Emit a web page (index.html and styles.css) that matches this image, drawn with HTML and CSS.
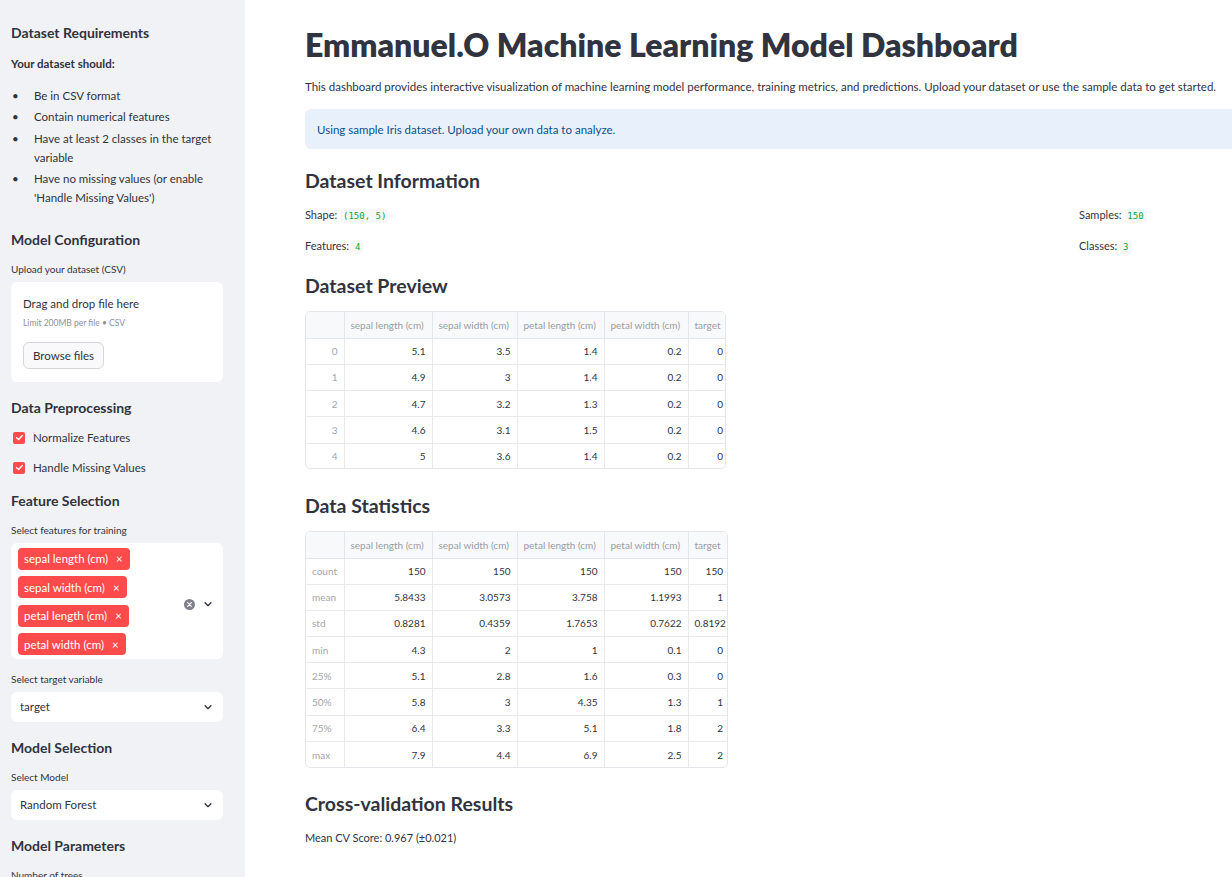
FILE: index.html
```html
<!DOCTYPE html>
<html lang="en">
<head>
<meta charset="utf-8">
<title>Emmanuel.O Machine Learning Model Dashboard</title>
<link rel="stylesheet" href="styles.css">
</head>
<body>
<div class="app">
  <aside class="sidebar">
    <h3 class="sb-h first">Dataset Requirements</h3>
    <p class="sb-strong">Your dataset should:</p>
    <ul class="req">
      <li>Be in CSV format</li>
      <li>Contain numerical features</li>
      <li>Have at least 2 classes in the target variable</li>
      <li>Have no missing values (or enable 'Handle Missing Values')</li>
    </ul>

    <h3 class="sb-h">Model Configuration</h3>
    <div class="lbl">Upload your dataset (CSV)</div>
    <div class="uploader">
      <div class="up-title">Drag and drop file here</div>
      <div class="up-sub">Limit 200MB per file • CSV</div>
      <button class="btn">Browse files</button>
    </div>

    <h3 class="sb-h">Data Preprocessing</h3>
    <div class="check">
      <span class="box"><svg viewBox="0 0 12 12" width="9" height="9"><path d="M2.2 6.2 4.8 8.6 9.8 3.4" fill="none" stroke="#fff" stroke-width="1.8" stroke-linecap="round" stroke-linejoin="round"/></svg></span>
      <span>Normalize Features</span>
    </div>
    <div class="check second">
      <span class="box"><svg viewBox="0 0 12 12" width="9" height="9"><path d="M2.2 6.2 4.8 8.6 9.8 3.4" fill="none" stroke="#fff" stroke-width="1.8" stroke-linecap="round" stroke-linejoin="round"/></svg></span>
      <span>Handle Missing Values</span>
    </div>

    <h3 class="sb-h">Feature Selection</h3>
    <div class="lbl">Select features for training</div>
    <div class="multi">
      <div class="tags">
        <span class="tag">sepal length (cm)<span class="tx">×</span></span>
        <span class="tag">sepal width (cm)<span class="tx">×</span></span>
        <span class="tag">petal length (cm)<span class="tx">×</span></span>
        <span class="tag">petal width (cm)<span class="tx">×</span></span>
      </div>
      <div class="ms-icons">
        <svg class="clear" viewBox="0 0 12 12" width="11" height="11"><circle cx="6" cy="6" r="6" fill="#7f828c"/><path d="M4 4 8 8M8 4 4 8" stroke="#fff" stroke-width="1.3" stroke-linecap="round"/></svg>
        <svg class="chev" viewBox="0 0 12 12" width="10" height="10"><path d="M2.5 4.5 6 8 9.5 4.5" fill="none" stroke="#31333f" stroke-width="1.6" stroke-linecap="round" stroke-linejoin="round"/></svg>
      </div>
    </div>

    <div class="lbl after-widget">Select target variable</div>
    <div class="select">
      <span>target</span>
      <svg class="chev" viewBox="0 0 12 12" width="10" height="10"><path d="M2.5 4.5 6 8 9.5 4.5" fill="none" stroke="#31333f" stroke-width="1.6" stroke-linecap="round" stroke-linejoin="round"/></svg>
    </div>

    <h3 class="sb-h">Model Selection</h3>
    <div class="lbl">Select Model</div>
    <div class="select">
      <span>Random Forest</span>
      <svg class="chev" viewBox="0 0 12 12" width="10" height="10"><path d="M2.5 4.5 6 8 9.5 4.5" fill="none" stroke="#31333f" stroke-width="1.6" stroke-linecap="round" stroke-linejoin="round"/></svg>
    </div>

    <h3 class="sb-h">Model Parameters</h3>
    <div class="lbl">Number of trees</div>
  </aside>

  <main class="main">
    <h1 class="title">Emmanuel.O Machine Learning Model Dashboard</h1>
    <p class="desc">This dashboard provides interactive visualization of machine learning model performance, training metrics, and predictions. Upload your dataset or use the sample data to get started.</p>
    <div class="info">Using sample Iris dataset. Upload your own data to analyze.</div>

    <h2 class="h2">Dataset Information</h2>
    <div class="info-grid">
      <div class="col">
        <p class="kv">Shape: <code>(150, 5)</code></p>
        <p class="kv">Features: <code>4</code></p>
      </div>
      <div class="col">
        <p class="kv">Samples: <code>150</code></p>
        <p class="kv">Classes: <code>3</code></p>
      </div>
    </div>

    <h2 class="h2">Dataset Preview</h2>
    <div class="frame preview">
      <table class="df">
        <colgroup><col class="c0"><col class="c1"><col class="c2"><col class="c3"><col class="c4"><col class="c5"></colgroup>
        <thead><tr><th></th><th>sepal length (cm)</th><th>sepal width (cm)</th><th>petal length (cm)</th><th>petal width (cm)</th><th>target</th></tr></thead>
        <tbody>
          <tr><td class="ix">0</td><td>5.1</td><td>3.5</td><td>1.4</td><td>0.2</td><td>0</td></tr>
          <tr><td class="ix">1</td><td>4.9</td><td>3</td><td>1.4</td><td>0.2</td><td>0</td></tr>
          <tr><td class="ix">2</td><td>4.7</td><td>3.2</td><td>1.3</td><td>0.2</td><td>0</td></tr>
          <tr><td class="ix">3</td><td>4.6</td><td>3.1</td><td>1.5</td><td>0.2</td><td>0</td></tr>
          <tr><td class="ix">4</td><td>5</td><td>3.6</td><td>1.4</td><td>0.2</td><td>0</td></tr>
        </tbody>
      </table>
    </div>

    <h2 class="h2 gap-stats">Data Statistics</h2>
    <div class="frame stats">
      <table class="df">
        <colgroup><col class="c0"><col class="c1"><col class="c2"><col class="c3"><col class="c4"><col class="c5"></colgroup>
        <thead><tr><th></th><th>sepal length (cm)</th><th>sepal width (cm)</th><th>petal length (cm)</th><th>petal width (cm)</th><th>target</th></tr></thead>
        <tbody>
          <tr><td class="ix">count</td><td>150</td><td>150</td><td>150</td><td>150</td><td>150</td></tr>
          <tr><td class="ix">mean</td><td>5.8433</td><td>3.0573</td><td>3.758</td><td>1.1993</td><td>1</td></tr>
          <tr><td class="ix">std</td><td>0.8281</td><td>0.4359</td><td>1.7653</td><td>0.7622</td><td>0.8192</td></tr>
          <tr><td class="ix">min</td><td>4.3</td><td>2</td><td>1</td><td>0.1</td><td>0</td></tr>
          <tr><td class="ix">25%</td><td>5.1</td><td>2.8</td><td>1.6</td><td>0.3</td><td>0</td></tr>
          <tr><td class="ix">50%</td><td>5.8</td><td>3</td><td>4.35</td><td>1.3</td><td>1</td></tr>
          <tr><td class="ix">75%</td><td>6.4</td><td>3.3</td><td>5.1</td><td>1.8</td><td>2</td></tr>
          <tr><td class="ix">max</td><td>7.9</td><td>4.4</td><td>6.9</td><td>2.5</td><td>2</td></tr>
        </tbody>
      </table>
    </div>

    <h2 class="h2 gap-cv">Cross-validation Results</h2>
    <p class="kv">Mean CV Score: 0.967 (±0.021)</p>
  </main>
</div>
</body>
</html>
```

FILE: styles.css
```css
* { box-sizing: border-box; }

html, body {
  margin: 0;
  padding: 0;
  width: 1232px;
  height: 877px;
  overflow: hidden;
  background: #ffffff;
}

body {
  font-family: "Lato", "Liberation Sans", sans-serif;
  color: #31333f;
  -webkit-font-smoothing: antialiased;
}

.app {
  display: flex;
  height: 877px;
}

/* ---------- Sidebar ---------- */
.sidebar {
  flex: 0 0 245px;
  width: 245px;
  height: 877px;
  overflow: hidden;
  background: #f0f2f6;
  padding: 0 22px 0 11px;
  display: flex;
  flex-direction: column;
}
.sidebar > * { flex-shrink: 0; }

.sb-h {
  margin: 16px 0 0;
  font-size: 14px;
  line-height: 20px;
  font-weight: 700;
  color: #31333f;
}
.sb-h.first { margin-top: 23px; }

.sb-strong {
  margin: 12px 0 0;
  font-size: 11.5px;
  line-height: 18px;
  font-weight: 700;
}

.req {
  list-style: none;
  margin: 12.5px 0 0;
  padding: 0;
  font-size: 11.5px;
  line-height: 19px;
}
.req li {
  display: flex;
  margin-bottom: 2.5px;
}
.req li:last-child { margin-bottom: 0; }
.req li::before {
  content: "•";
  flex: 0 0 22px;
  padding-left: 1px;
}
.req + .sb-h { margin-top: 22.5px; }

.lbl {
  margin-top: 12px;
  font-size: 10px;
  line-height: 14px;
}
.lbl.after-widget { margin-top: 13px; }

.uploader {
  margin-top: 6px;
  height: 100px;
  background: #ffffff;
  border-radius: 6px;
  padding: 14px 12px 0;
}
.up-title {
  font-size: 11.5px;
  line-height: 16px;
}
.up-sub {
  margin-top: 5px;
  font-size: 8.5px;
  line-height: 12px;
  color: #8e9098;
}
.btn {
  margin-top: 13px;
  height: 27px;
  padding: 0 9px;
  font-family: inherit;
  font-size: 11.5px;
  color: #31333f;
  background: #f9f9fb;
  border: 1px solid #d5d6da;
  border-radius: 6px;
}

.check {
  margin-top: 11px;
  display: flex;
  align-items: center;
  gap: 8px;
  height: 18px;
  padding-left: 2px;
  font-size: 11.5px;
}
.check.second { margin-top: 12px; }
.check + .sb-h { margin-top: 14px; }
.box {
  width: 12px;
  height: 12px;
  border-radius: 2px;
  background: #ff4b4b;
  display: flex;
  align-items: center;
  justify-content: center;
}

.multi {
  margin-top: 6px;
  background: #ffffff;
  border-radius: 6px;
  height: 116px;
  padding: 5px 10px 0 7px;
  display: flex;
  align-items: center;
  justify-content: space-between;
}
.tags {
  align-self: flex-start;
  display: flex;
  flex-direction: column;
  align-items: flex-start;
  gap: 6.5px;
}
.tag {
  height: 22px;
  display: inline-flex;
  align-items: center;
  padding: 0 7px 0 6px;
  background: #ff4b4b;
  color: #ffffff;
  border-radius: 4px;
  font-size: 11.5px;
}
.tx {
  margin-left: 8px;
  font-size: 11.5px;
}
.ms-icons {
  display: flex;
  align-items: center;
  gap: 8px;
  margin-top: 2px;
}

.select {
  margin-top: 6px;
  height: 30px;
  background: #ffffff;
  border-radius: 6px;
  padding: 0 10px 0 9px;
  display: flex;
  align-items: center;
  justify-content: space-between;
  font-size: 11.5px;
}

/* ---------- Main ---------- */
.main {
  flex: 1 1 auto;
  min-width: 0;
  padding: 0 0 0 60px;
  overflow: hidden;
}

.title {
  margin: 25px 0 0;
  font-size: 32px;
  line-height: 40px;
  font-weight: 800;
  white-space: nowrap;
}

.desc {
  margin: 13px 0 0;
  font-size: 11.5px;
  line-height: 18px;
  white-space: nowrap;
}

.info {
  margin-top: 13px;
  height: 40px;
  background: #e8f1fb;
  border-radius: 6px 0 0 6px;
  padding: 0 12px;
  display: flex;
  align-items: center;
  color: #0c4f8e;
  font-size: 11.5px;
}

.h2 {
  margin: 19px 0 0;
  font-size: 19.5px;
  line-height: 26px;
  font-weight: 700;
}
.h2.gap-stats { margin-top: 24px; }
.h2.gap-cv { margin-top: 23px; }
.info-grid + .h2 { margin-top: 17px; }

.info-grid {
  display: grid;
  grid-template-columns: 774px 1fr;
  margin-top: 3px;
}

.kv {
  margin: 9px 0 0;
  font-size: 11px;
  line-height: 18px;
}
.col .kv + .kv { margin-top: 12px; }
.h2 + .kv { margin-top: 12px; }

code {
  font-family: "DejaVu Sans Mono", "Liberation Mono", monospace;
  font-size: 9px;
  color: #09ab3b;
  background: #f6f7f9;
  padding: 2px 3px;
  border-radius: 4px;
}

.frame {
  margin-top: 12px;
  border: 1px solid #e4e6eb;
  border-radius: 5px;
  overflow: hidden;
}
.preview { width: 421px; height: 158px; }
.stats { width: 423px; height: 237px; }

.df {
  border-collapse: collapse;
  table-layout: fixed;
  width: 423px;
  font-size: 10px;
}
.c0 { width: 38px; }
.c1 { width: 88px; }
.c2 { width: 85px; }
.c3 { width: 87px; }
.c4 { width: 84px; }
.c5 { width: 41px; }

.df th {
  height: 26px;
  background: #f8f9fb;
  color: #9a9ca5;
  font-weight: 400;
  text-align: left;
  padding: 0 6px;
  white-space: nowrap;
  overflow: hidden;
  border-right: 1px solid #e4e6eb;
  border-bottom: 1px solid #e4e6eb;
}
.df td {
  height: 26.3px;
  text-align: right;
  padding: 0 6px;
  white-space: nowrap;
  overflow: hidden;
  border-right: 1px solid #e9eaee;
  border-bottom: 1px solid #e9eaee;
}
.stats .df td { height: 26.2px; }
.df td.ix {
  color: #a3a5ad;
  text-align: right;
}
.stats .df td.ix { text-align: left; }
.df tr > :last-child { border-right: none; }
.stats .df tbody tr:last-child td { border-bottom: none; }
```
